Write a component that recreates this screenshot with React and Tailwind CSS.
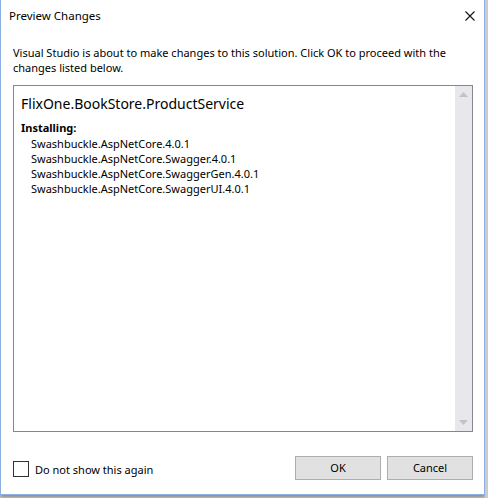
import React from "react";

const items = [
  "Swashbuckle.AspNetCore.4.0.1",
  "Swashbuckle.AspNetCore.Swagger.4.0.1",
  "Swashbuckle.AspNetCore.SwaggerGen.4.0.1",
  "Swashbuckle.AspNetCore.SwaggerUI.4.0.1",
];

function Scrollbar() {
  return (
    <div className="flex w-[17px] flex-col items-center justify-between bg-[#e8e8ec] py-[6px]">
      <svg width="9" height="5" viewBox="0 0 9 5">
        <path d="M0 5 L4.5 0 L9 5 Z" fill="#c2c3c9" />
      </svg>
      <svg width="9" height="5" viewBox="0 0 9 5">
        <path d="M0 0 L4.5 5 L9 0 Z" fill="#c2c3c9" />
      </svg>
    </div>
  );
}

export default function App() {
  return (
    <div
      className="flex h-[498px] w-[488px] bg-[#c9ccd1] text-[11px] text-black"
      style={{ fontFamily: '"Noto Sans", "Open Sans", sans-serif' }}
    >
      <div className="flex h-[495px] w-[485px] flex-col border-x border-b border-[#8cb1e2] bg-white shadow-[0_2px_4px_rgba(0,0,0,0.35)]">
        <div className="flex h-[30px] items-center justify-between pl-[8px] pr-[9px]">
          <span className="pt-[2px] text-[11.5px]">Preview Changes</span>
          <svg width="10" height="10" viewBox="0 0 10 10" className="mt-[2px]">
            <path d="M0.5 0.5 L9.5 9.5 M9.5 0.5 L0.5 9.5" stroke="#111" strokeWidth="1.1" />
          </svg>
        </div>

        <p className="mt-[15px] pl-[12px] pr-[20px] leading-[15px]">
          Visual Studio is about to make changes to this solution. Click OK to proceed with the changes listed below.
        </p>

        <div className="ml-[12px] mt-[10px] flex h-[347px] w-[460px] border border-[#828790]">
          <div className="flex-1 pl-[7px] pt-[8px]">
            <div className="text-[14px] leading-[20px]">FlixOne.BookStore.ProductService</div>
            <div className="mt-[6px] font-bold leading-[15px]">Installing:</div>
            <ul className="mt-[1px] pl-[10px] leading-[15px]">
              {items.map((it) => (
                <li key={it}>{it}</li>
              ))}
            </ul>
          </div>
          <Scrollbar />
        </div>

        <div className="mt-[24px] flex items-center justify-between pl-[12px] pr-[11px]">
          <label className="flex items-center gap-[6px]">
            <span className="mt-[2px] h-[16px] w-[16px] border border-[#333]" />
            <span className="pt-[3px] leading-[15px]">Do not show this again</span>
          </label>
          <div className="flex gap-[6px]">
            <button className="h-[24px] w-[86px] border border-[#adadad] bg-[#e1e1e1]">OK</button>
            <button className="h-[24px] w-[86px] border border-[#adadad] bg-[#e1e1e1]">Cancel</button>
          </div>
        </div>
      </div>
      <div className="flex-1 bg-[#c9ccd1]" />
    </div>
  );
}
